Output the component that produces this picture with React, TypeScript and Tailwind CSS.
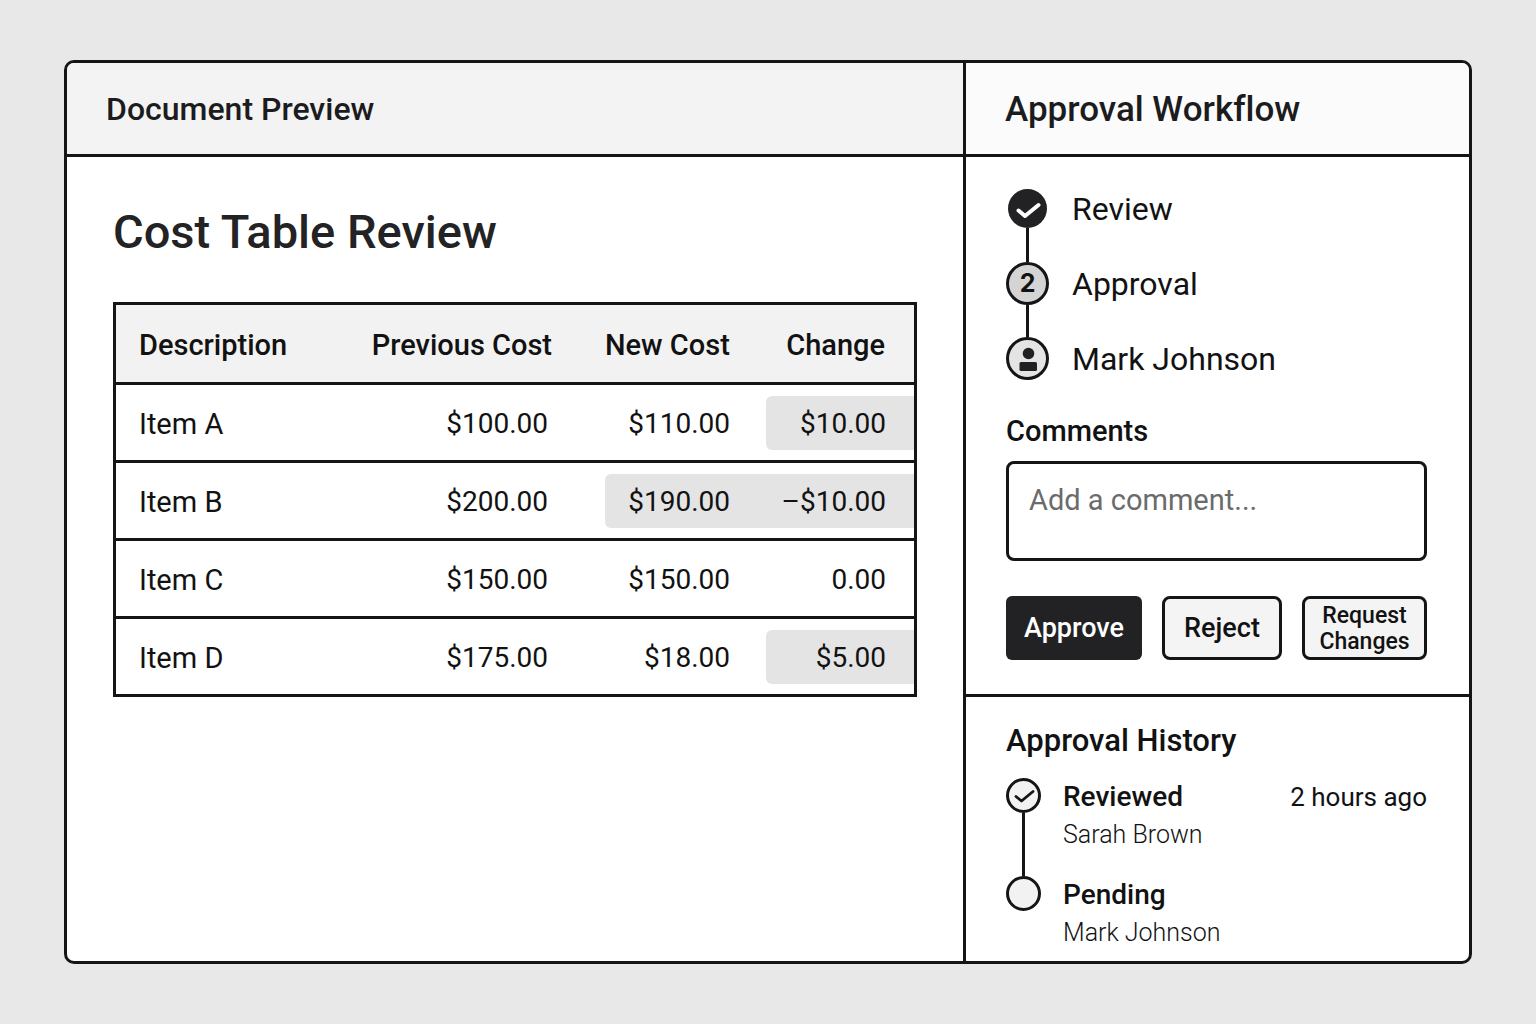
import type { ReactNode } from "react";

type Row = {
  item: string;
  previous: string;
  next: string;
  change: string;
  highlight: "none" | "change" | "both";
};

const rows: Row[] = [
  { item: "Item A", previous: "$100.00", next: "$110.00", change: "$10.00", highlight: "change" },
  { item: "Item B", previous: "$200.00", next: "$190.00", change: "–$10.00", highlight: "both" },
  { item: "Item C", previous: "$150.00", next: "$150.00", change: "0.00", highlight: "none" },
  { item: "Item D", previous: "$175.00", next: "$18.00", change: "$5.00", highlight: "change" },
];

function CostTable() {
  const cell = "border-t-3 border-[#151517] pt-[11px] pb-[10px] font-normal";
  const box = "flex h-[54px] items-center pt-[2px]";
  const amount = `${box} justify-end text-[28px]`;
  const head = "pt-[3px] font-medium whitespace-nowrap";
  return (
    <table className="w-full table-fixed border-separate border-spacing-0 border-3 border-[#151517] text-[29px] leading-9">
      <colgroup>
        <col />
        <col className="w-[260px]" />
        <col className="w-[161px]" />
        <col className="w-[148px]" />
      </colgroup>
      <thead>
        <tr className="h-[77px] bg-[#f2f2f2]">
          <th scope="col" className={`${head} pl-[23px] text-left`}>Description</th>
          <th scope="col" className={`${head} pr-[53px] text-right`}>Previous Cost</th>
          <th scope="col" className={`${head} pr-[37px] text-right`}>New Cost</th>
          <th scope="col" className={`${head} pr-[29px] text-right`}>Change</th>
        </tr>
      </thead>
      <tbody>
        {rows.map((r) => (
          <tr key={r.item}>
            <th scope="row" className={cell}>
              <div className={`${box} pl-[23px]`}>{r.item}</div>
            </th>
            <td className={cell}>
              <div className={`${amount} pr-[57px]`}>{r.previous}</div>
            </td>
            <td className={cell}>
              <div className={`${amount} pr-9 ${r.highlight === "both" ? "rounded-l-md bg-[#e4e4e4]" : ""}`}>
                {r.next}
              </div>
            </td>
            <td className={cell}>
              <div
                className={`${amount} pr-7 ${
                  r.highlight === "both" ? "bg-[#e4e4e4]" : r.highlight === "change" ? "rounded-l-md bg-[#e4e4e4]" : ""
                }`}
              >
                {r.change}
              </div>
            </td>
          </tr>
        ))}
      </tbody>
    </table>
  );
}

function Step({ marker, label, last = false }: { marker: ReactNode; label: string; last?: boolean }) {
  return (
    <li className={`flex gap-[23px] ${last ? "h-[43px]" : "h-[75px]"}`}>
      <div className="flex w-[43px] flex-col items-center">
        {marker}
        {!last && <span className="w-[3px] flex-1 bg-[#151517]" />}
      </div>
      <span className="text-[32px] leading-[45px]">{label}</span>
    </li>
  );
}

function HistoryEntry({
  title,
  person,
  time,
  done = false,
  last = false,
}: {
  title: string;
  person: string;
  time?: string;
  done?: boolean;
  last?: boolean;
}) {
  return (
    <li className={`flex gap-[22px] ${last ? "" : "h-[98px]"}`}>
      <div className="flex w-[35px] flex-col items-center">
        <span className="flex size-[35px] items-center justify-center rounded-full border-3 border-[#151517] bg-[#f2f2f2]">
          {done && (
            <svg viewBox="-12 -12 24 24" className="size-6" fill="none" stroke="#151517" strokeWidth="2.8" strokeLinecap="round" strokeLinejoin="round" aria-hidden="true">
              <path d="M-8 0.5 L-2.5 5 L9 -4.5" />
            </svg>
          )}
        </span>
        {!last && <span className="w-[3px] flex-1 bg-[#151517]" />}
      </div>
      <div className="flex-1">
        <div className="flex items-center justify-between leading-[38px]">
          <span className="text-[28px] font-medium">{title}</span>
          {time && <time className="text-[26px]">{time}</time>}
        </div>
        <p className="text-[25px] leading-[38px] font-light text-[#121213]">{person}</p>
      </div>
    </li>
  );
}

export default function App() {
  return (
    <div className="flex min-h-screen bg-[#e8e8e8] px-16 py-15 font-[Roboto,sans-serif] text-[#121213]">
      <main className="grid flex-1 grid-cols-[minmax(0,1fr)_506px] overflow-hidden rounded-[10px] border-3 border-[#151517] bg-white">
        <section className="flex flex-col">
          <header className="flex h-[94px] items-center border-b-3 border-[#151517] bg-[#f3f3f3] pl-[39px]">
            <h2 className="text-[32px] leading-10 font-medium text-[#1c1c1e]">Document Preview</h2>
          </header>
          <div className="px-[46px] pt-[47px]">
            <h1 className="mb-[42px] text-[47px] leading-14 font-medium text-[#232325]">Cost Table Review</h1>
            <CostTable />
          </div>
        </section>

        <aside className="flex flex-col border-l-3 border-[#151517]">
          <header className="flex h-[94px] items-center border-b-3 border-[#151517] bg-[#fbfbfb] pt-[2px] pl-[39px]">
            <h2 className="text-[35px] leading-10 font-medium text-[#1c1c1e] [font-variant-ligatures:none]">
              Approval Workflow
            </h2>
          </header>

          <section className="border-b-3 border-[#151517] pt-[30px] pr-[42px] pb-[34px] pl-10">
            <ol>
              <Step
                label="Review"
                marker={
                  <span className="mt-[2px] flex size-[39px] items-center justify-center rounded-full bg-[#222224]">
                    <svg viewBox="-14 -14 28 28" className="size-7" fill="none" stroke="#fff" strokeWidth="4" strokeLinecap="round" strokeLinejoin="round" aria-hidden="true">
                      <path d="M-9.5 1.5 L-3 7 L10.5 -4" />
                    </svg>
                  </span>
                }
              />
              <Step
                label="Approval"
                marker={
                  <span className="flex size-[43px] items-center justify-center rounded-full border-3 border-[#151517] bg-[#d4d4d4] font-[Inter,sans-serif] text-[25px] font-bold">
                    2
                  </span>
                }
              />
              <Step
                last
                label="Mark Johnson"
                marker={
                  <span className="flex size-[43px] items-center justify-center rounded-full border-3 border-[#151517] bg-[#e4e4e4]">
                    <svg viewBox="-14 -14 28 28" className="size-7" fill="#202022" aria-hidden="true">
                      <circle cx="0.5" cy="-5.5" r="5.8" />
                      <rect x="-8.5" y="3" width="17.5" height="9" rx="1.5" />
                    </svg>
                  </span>
                }
              />
            </ol>

            <label htmlFor="comment" className="mt-[33px] block text-[29px] leading-9 font-medium">
              Comments
            </label>
            <textarea
              id="comment"
              placeholder="Add a comment..."
              className="mt-3 block h-[100px] w-full resize-none rounded-lg border-3 border-[#151517] bg-white px-5 pt-[18px] text-[29px] leading-9 placeholder:text-[#6b6b6b]"
            />

            <div className="mt-[35px] grid h-16 grid-cols-[136fr_120fr_125fr] gap-5 font-medium">
              <button type="button" className="rounded-md bg-[#222224] text-[27px] text-white">
                Approve
              </button>
              <button type="button" className="rounded-lg border-3 border-[#151517] bg-[#f4f4f4] text-[27px]">
                Reject
              </button>
              <button type="button" className="rounded-lg border-3 border-[#151517] bg-[#f4f4f4] pt-[2px] text-[23px] leading-[26px]">
                Request Changes
              </button>
            </div>
          </section>

          <section className="pt-6 pr-[42px] pl-10">
            <h3 className="mb-[17px] text-[31px] leading-10 font-medium">Approval History</h3>
            <ol>
              <HistoryEntry done title="Reviewed" person="Sarah Brown" time="2 hours ago" />
              <HistoryEntry last title="Pending" person="Mark Johnson" />
            </ol>
          </section>
        </aside>
      </main>
    </div>
  );
}
